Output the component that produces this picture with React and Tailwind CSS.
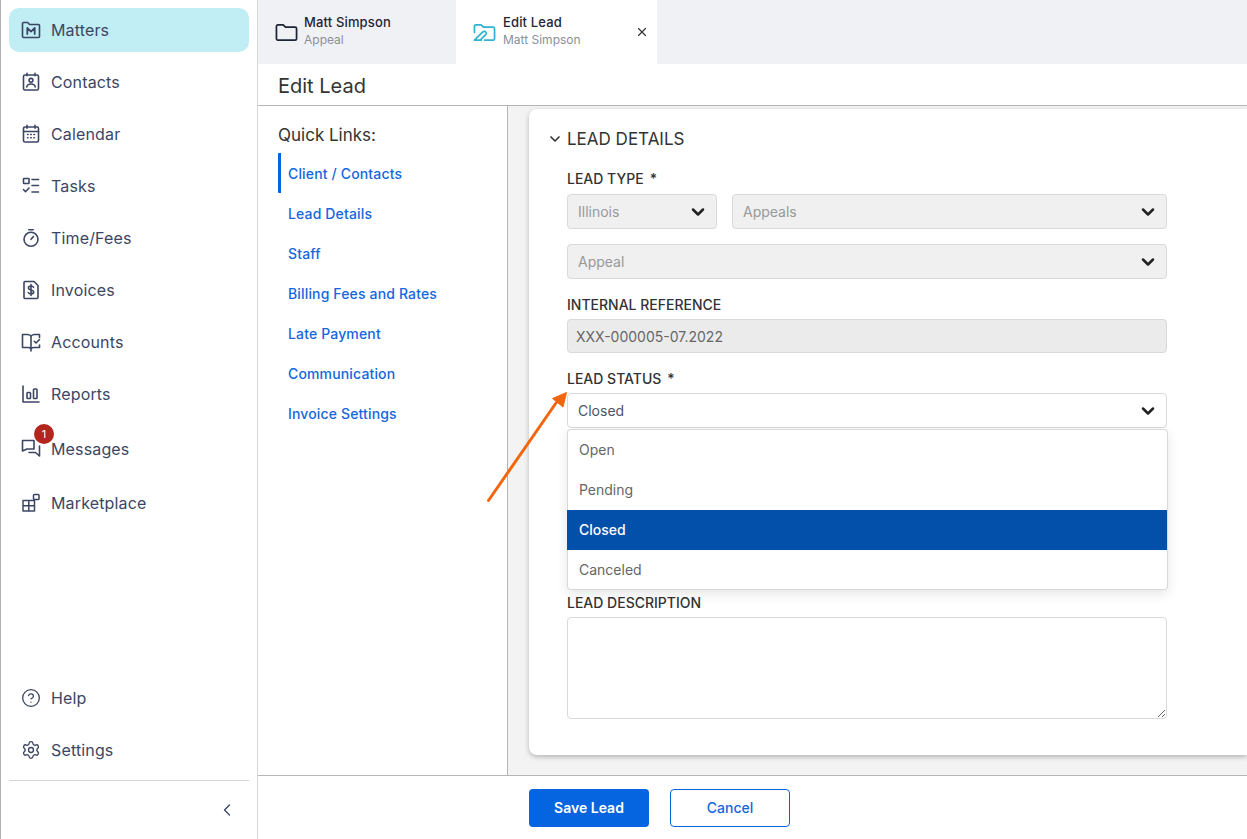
import React from 'react';
import { ChevronDown, ChevronLeft, X, CircleHelp, Settings } from 'lucide-react';

const stroke = {
  fill: 'none',
  stroke: 'currentColor',
  strokeWidth: 1.6,
  strokeLinecap: 'round',
  strokeLinejoin: 'round',
};

const Svg = ({ children, className = 'w-5 h-5' }) => (
  <svg viewBox="0 0 20 20" className={className} {...stroke}>
    {children}
  </svg>
);

const MattersIcon = () => (
  <Svg>
    <path d="M1.500 3.500c0-.6.4-1 1-1h4.200l1.800 2h9c.6 0 1 .4 1 1v11c0 .6-.4 1-1 1h-15c-.6 0-1-.4-1-1z" />
    <path d="M6.300 14V8l3.700 3.600L13.700 8v6" strokeWidth="1.800" />
  </Svg>
);

const ContactsIcon = () => (
  <Svg>
    <rect x="2.500" y="3" width="15" height="15" rx="1.400" />
    <path d="M6 1.300v2.400M14 1.300v2.400" />
    <circle cx="10" cy="8.300" r="1.900" />
    <path d="M5.800 15c.3-2 2-3 4.200-3s3.900 1 4.200 3" />
  </Svg>
);

const CalendarIcon = () => (
  <Svg>
    <rect x="2.500" y="3" width="15" height="15" rx="1.400" />
    <path d="M2.500 7.500h15M6 1.300v3M14 1.300v3" />
    <path d="M6.500 10.500h.6M9.700 10.500h.6M12.900 10.500h.6M6.500 13.800h.6M9.700 13.800h.6M12.900 13.800h.6" strokeWidth="1.500" />
  </Svg>
);

const TasksIcon = () => (
  <Svg>
    <rect x="2.500" y="2.500" width="5.500" height="5" rx=".6" />
    <path d="M11 3.500h6.500M11 9.500h6.500M11 16h6.500" />
    <path d="M2.500 13.500l2 2.200 3.500-3.700" />
  </Svg>
);

const TimerIcon = () => (
  <Svg>
    <circle cx="10" cy="11.300" r="7" />
    <path d="M7.800 1.800h4.400M10 11.300l2.400-2.700" />
  </Svg>
);

const InvoiceIcon = () => (
  <Svg>
    <path d="M4 1.500h9l4 4v12c0 .6-.4 1-1 1H4c-.6 0-1-.4-1-1v-15c0-.6.4-1 1-1z" />
    <path d="M12.500 7.300c-.4-.9-1.300-1.300-2.500-1.300-1.500 0-2.600.7-2.600 1.900 0 2.600 5.300 1.400 5.300 4.100 0 1.200-1.200 1.900-2.700 1.900-1.300 0-2.300-.5-2.700-1.400M10 4.500v11" />
  </Svg>
);

const AccountsIcon = () => (
  <Svg>
    <path d="M10 4c-1-1-2-1.500-3.500-1.500H1.500v13H7c1.300 0 2.300.4 3 1.200V4zM10 17.700v1.300" />
    <path d="M10 4c1-1 2-1.500 3.500-1.500h5v3M18.500 13v2.500H13c-1.300 0-2.300.4-3 1.200" />
    <path d="M13.300 9.300l1.700 1.700 3.500-3.500" />
  </Svg>
);

const ReportsIcon = () => (
  <Svg>
    <path d="M2 2v16h16" />
    <rect x="6" y="8.500" width="3.500" height="6" rx=".8" />
    <rect x="12.500" y="5" width="3.500" height="9.500" rx=".8" />
  </Svg>
);

const MessagesIcon = () => (
  <Svg>
    <path d="M1.500 1.500H13v8.500H6l-4.500 2z" />
    <path d="M8 13.500h6.500l4 3.500V7" />
  </Svg>
);

const MarketplaceIcon = () => (
  <Svg>
    <path d="M2 7.500h11.500V18H2zM2 12.800h11.500M7.800 7.500V18" strokeWidth="1.500" />
    <rect x="12.500" y="1.500" width="5.500" height="5" rx=".8" strokeWidth="1.500" />
  </Svg>
);

const navItems = [
  { label: 'Contacts', icon: <ContactsIcon /> },
  { label: 'Calendar', icon: <CalendarIcon /> },
  { label: 'Tasks', icon: <TasksIcon /> },
  { label: 'Time/Fees', icon: <TimerIcon /> },
  { label: 'Invoices', icon: <InvoiceIcon /> },
  { label: 'Accounts', icon: <AccountsIcon /> },
  { label: 'Reports', icon: <ReportsIcon /> },
];

const quickLinks = [
  'Lead Details',
  'Staff',
  'Billing Fees and Rates',
  'Late Payment',
  'Communication',
  'Invoice Settings',
];

const NavItem = ({ icon, label, className = '' }) => (
  <div className={`flex items-center h-11 pl-[12px] gap-[10px] text-[#3c4664] text-[16px] tracking-[0.15px] ${className}`}>
    <span className="w-5 h-5 flex items-center justify-center shrink-0">{icon}</span>
    <span>{label}</span>
  </div>
);

const Label = ({ children, required }) => (
  <div className="text-[14px] leading-[16px] font-medium text-[#333333]">
    {children}
    {required && <span className="ml-[6px]">*</span>}
  </div>
);

const DisabledSelect = ({ value, className = '' }) => (
  <div className={`h-[35px] flex items-center justify-between pl-[10px] pr-[8px] rounded border border-[#d9d9d9] bg-[#f0f0f0] text-[14px] text-[#999999] ${className}`}>
    <span>{value}</span>
    <ChevronDown className="w-5 h-5 text-[#222222]" strokeWidth={3} />
  </div>
);

export default function App() {
  return (
    <div className="relative w-[1247px] h-[839px] overflow-hidden bg-white flex font-['Inter',sans-serif]">
      <aside className="w-[258px] shrink-0 h-full border-l border-l-[#b0b0b0] border-r border-r-[#d8d8d8] flex flex-col">
        <div className="pt-2 px-2 flex flex-col gap-2">
          <NavItem icon={<MattersIcon />} label="Matters" className="bg-[#c1edf4] rounded-[10px]" />
          {navItems.map((item) => (
            <NavItem key={item.label} icon={item.icon} label={item.label} />
          ))}
          <div className="relative mt-[3px]">
            <NavItem icon={<MessagesIcon />} label="Messages" />
            <span className="absolute left-[25px] top-[-3px] w-5 h-5 rounded-full bg-[#b3261e] text-white text-[11px] flex items-center justify-center">
              1
            </span>
          </div>
          <NavItem icon={<MarketplaceIcon />} label="Marketplace" className="mt-[2px]" />
        </div>
        <div className="mt-auto px-2 flex flex-col gap-2">
          <NavItem icon={<CircleHelp className="w-5 h-5" strokeWidth={1.6} />} label="Help" />
          <NavItem icon={<Settings className="w-5 h-5" strokeWidth={1.6} />} label="Settings" />
        </div>
        <div className="mx-2 mt-2 h-[59px] border-t border-[#d5d5d5] flex items-center justify-end pr-[12px]">
          <ChevronLeft className="w-5 h-5 text-[#3c4664]" strokeWidth={1.6} />
        </div>
      </aside>

      <main className="flex-1 min-w-0 flex flex-col">
        <div className="h-16 shrink-0 bg-[#f0f1f5] flex">
          <div className="w-[198px] flex items-center pl-[17px] gap-[6px]">
            <svg viewBox="0 0 24 24" className="w-[23px] h-[23px] text-[#1c2333]" {...stroke} strokeWidth="1.800">
              <path d="M1.500 5.500c0-.8.600-1.500 1.500-1.500h5.500l2.500 2.500h10c.9 0 1.500.7 1.500 1.500v10.500c0 .8-.6 1.500-1.500 1.500H3c-.9 0-1.500-.7-1.500-1.500z" />
            </svg>
            <div className="flex flex-col pb-[3px]">
              <span className="text-[13px] leading-[17px] font-medium text-[#1f2537] tracking-[0.15px]">Matt Simpson</span>
              <span className="text-[12px] leading-[17px] text-[#8c8f99]">Appeal</span>
            </div>
          </div>
          <div className="w-[201px] bg-white flex items-center pl-[17px] pr-[8px] gap-[7px]">
            <svg viewBox="0 0 24 24" className="w-[23px] h-[23px] text-[#2fb3d1]" {...stroke} strokeWidth="1.800">
              <path d="M1.500 12V5.500C1.500 4.700 2.100 4 3 4h5.500l2.500 2.500h10c.9 0 1.500.7 1.500 1.500v10.500c0 .8-.6 1.500-1.500 1.500h-9" />
              <path d="M2 19.500l8-8c1-1 2.600-1 3.300 0 .8.900.6 2.200-.3 3l-5.500 5.500H2.500zM1.500 20h7" />
            </svg>
            <div className="flex flex-col pb-[3px]">
              <span className="text-[13px] leading-[17px] font-medium text-[#1f2537] tracking-[0.15px]">Edit Lead</span>
              <span className="text-[12px] leading-[17px] text-[#8c8f99]">Matt Simpson</span>
            </div>
            <X className="ml-auto w-[14px] h-[14px] text-[#333333]" strokeWidth={2} />
          </div>
        </div>

        <div className="h-[42px] shrink-0 border-b border-[#b5b5b5] flex items-center pl-[20px] pt-[2px] text-[20px] text-[#333333]">
          Edit Lead
        </div>

        <div className="flex-1 min-h-0 flex">
          <div className="w-[250px] shrink-0 border-r border-[#b5b5b5] pl-[20px] pt-[18px]">
            <div className="text-[17px] leading-[22px] text-[#333333] mb-[7px]">Quick Links:</div>
            <div className="h-10 border-l-[3px] border-[#0565e0] rounded-[1px] pl-[7px] flex items-center text-[14px] font-medium text-[#1466e0] tracking-[0.15px]">
              Client / Contacts
            </div>
            {quickLinks.map((link) => (
              <div key={link} className="h-10 pl-[10px] flex items-center text-[14px] font-medium text-[#1466e0] tracking-[0.15px]">
                {link}
              </div>
            ))}
          </div>

          <div className="flex-1 min-w-0 bg-[#f3f3f3] pl-[21px] pt-[3px]">
            <div className="relative h-[646px] bg-white rounded-l-[8px] shadow-[0_2px_5px_rgba(0,0,0,0.25)] pl-[38px] pt-[19px] w-[718px]">
              <div className="relative flex items-center text-[17px] leading-[22px] text-[#333333]">
                <ChevronDown className="absolute left-[-20px] w-4 h-4" strokeWidth={2.5} />
                LEAD DETAILS
              </div>
              <div className="w-[600px] mt-[21px]">
                <Label required>LEAD TYPE</Label>
                <div className="flex gap-[15px] mt-[7px]">
                  <DisabledSelect value="Illinois" className="w-[150px]" />
                  <DisabledSelect value="Appeals" className="flex-1" />
                </div>
                <DisabledSelect value="Appeal" className="mt-[15px]" />
                <div className="mt-[18px]">
                  <Label>INTERNAL REFERENCE</Label>
                </div>
                <div className="mt-[6px] h-[34px] flex items-center pl-[8px] rounded border border-[#d9d9d9] bg-[#ebebeb] text-[14px] text-[#666666]">
                  XXX-000005-07.2022
                </div>
                <div className="mt-[18px]">
                  <Label required>LEAD STATUS</Label>
                </div>
                <div className="relative mt-[6px]">
                  <div className="h-[35px] flex items-center justify-between pl-[10px] pr-[8px] rounded border border-[#d9d9d9] bg-white text-[14px] text-[#4a5568]">
                    <span>Closed</span>
                    <ChevronDown className="w-5 h-5 text-[#222222]" strokeWidth={3} />
                  </div>
                  <div className="absolute z-10 left-0 right-[-1px] top-[36px] h-[161px] pt-[1px] pr-[1px] rounded bg-white shadow-[inset_0_0_0_1px_#d9d9d9,0_4px_12px_rgba(0,0,0,0.1)] overflow-hidden text-[14px] text-[#666666]">
                    <div className="h-10 flex items-center pl-3 pb-[1px]">Open</div>
                    <div className="h-10 flex items-center pl-3 pb-[1px]">Pending</div>
                    <div className="h-10 flex items-center pl-3 pb-[1px] bg-[#0350aa] text-white font-medium">Closed</div>
                    <div className="h-10 flex items-center pl-3 pb-[1px]">Canceled</div>
                  </div>
                </div>
                <div className="mt-[167px]">
                  <Label>LEAD DESCRIPTION</Label>
                </div>
                <textarea className="block mt-[6px] w-full h-[102px] rounded border border-[#d9d9d9] bg-white" />
              </div>
            </div>
          </div>
        </div>

        <div className="h-[64px] shrink-0 border-t border-[#b5b5b5] bg-white flex items-center pl-[271px] gap-[21px]">
          <button type="button" className="w-[120px] h-[38px] rounded bg-[#0565e0] text-white text-[14px] font-semibold">
            Save Lead
          </button>
          <button type="button" className="w-[120px] h-[38px] rounded border border-[#0565e0] bg-white text-[#1466e0] text-[14px] font-medium">
            Cancel
          </button>
        </div>
      </main>

      <svg viewBox="0 0 1247 839" className="absolute inset-0 w-[1247px] h-[839px] z-20 pointer-events-none">
        <path d="M488.500 500.500L556 403" fill="none" stroke="#f2660f" strokeWidth="3" strokeLinecap="round" />
        <path d="M566.500 392.500L552.500 398.500 563 407z" fill="#f2660f" stroke="#f2660f" strokeWidth="1" strokeLinejoin="round" />
      </svg>
    </div>
  );
}
